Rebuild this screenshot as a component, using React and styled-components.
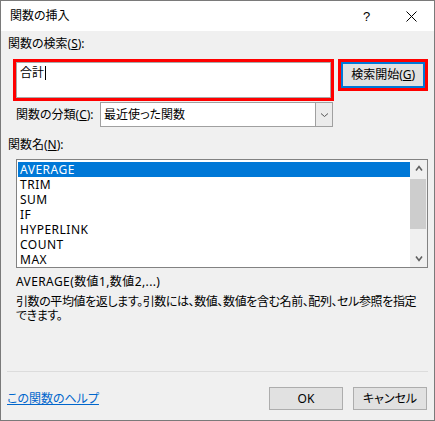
import React from "react";
import styled, { createGlobalStyle } from "styled-components";

const GlobalStyle = createGlobalStyle`
  html, body { margin: 0; padding: 0; background: #ffffff; }
  body {
    font-family: "Noto Sans", "Noto Sans CJK JP", sans-serif;
    font-size: 12px;
    color: #000;
    font-feature-settings: "palt";
  }
  * { box-sizing: border-box; }
`;

const Window = styled.div`
  width: 435px;
  height: 421px;
  border: 1px solid #7a7a7a;
  background: #f0f0f0;
  display: flex;
  flex-direction: column;
  overflow: hidden;
`;

const TitleBar = styled.div`
  height: 30px;
  flex: none;
  background: #ffffff;
  display: flex;
  align-items: center;
  padding-left: 9px;
`;

const Title = styled.div`
  flex: 1;
  font-size: 12px;
  line-height: 16px;
`;

const TitleButton = styled.div`
  width: 45px;
  height: 30px;
  display: flex;
  align-items: center;
  justify-content: center;
  font-family: "Liberation Sans", sans-serif;
  font-size: 13px;
`;

const Body = styled.div`
  flex: 1;
  display: flex;
  flex-direction: column;
  padding: 5px 6px 10px 7px;
`;

const Label = styled.div`
  line-height: 16px;
  height: 16px;
  margin-top: ${(p) => p.$top || 0}px;
  margin-left: ${(p) => p.$left || 0}px;
  white-space: nowrap;
`;

const SearchRow = styled.div`
  display: flex;
  align-items: flex-start;
  margin-top: 7px;
  margin-left: 5px;
  gap: 4px;
`;

const Highlight = styled.div`
  border: 3px solid #ff0000;
  width: ${(p) => p.$w}px;
  height: ${(p) => p.$h}px;
`;

const SearchBox = styled.div`
  width: 100%;
  height: 100%;
  background: #ffffff;
  border: 1px solid #a9a9a9;
  padding: 2px 3px;
  line-height: 16px;
  display: flex;
  align-items: flex-start;
`;

const Caret = styled.span`
  display: inline-block;
  width: 1px;
  height: 14px;
  margin-top: 1px;
  margin-left: 1px;
  background: #000;
`;

const SearchButton = styled.div`
  width: 100%;
  height: 100%;
  background: #e1e1e1;
  border: 2px solid #0078d7;
  display: flex;
  align-items: center;
  justify-content: center;
  line-height: 16px;
`;

const CategoryRow = styled.div`
  display: flex;
  align-items: center;
  margin-top: 1px;
  margin-left: 8px;
`;

const CategoryLabel = styled.div`
  width: 84px;
  line-height: 16px;
  white-space: nowrap;
`;

const Select = styled.div`
  width: 233px;
  height: 25px;
  background: #ffffff;
  border: 1px solid #a0a0a0;
  display: flex;
  align-items: stretch;
`;

const SelectValue = styled.div`
  flex: 1;
  padding-left: 3px;
  display: flex;
  align-items: center;
  line-height: 16px;
`;

const SelectArrow = styled.div`
  width: 17px;
  background: #ebebeb;
  border-left: 1px solid #a0a0a0;
  display: flex;
  align-items: center;
  justify-content: center;
`;

const ListBox = styled.div`
  margin-top: 6px;
  margin-left: 8px;
  width: 412px;
  height: 109px;
  border: 1px solid #828282;
  background: #ffffff;
  display: flex;
`;

const ListItems = styled.div`
  flex: 1;
  padding: 2px 0 0 1px;
`;

const Item = styled.div`
  height: 15px;
  line-height: 15px;
  padding-left: 2px;
  letter-spacing: 0.5px;
  background: ${(p) => (p.$selected ? "#0078d7" : "transparent")};
  color: ${(p) => (p.$selected ? "#ffffff" : "#000000")};
  white-space: nowrap;
`;

const Scrollbar = styled.div`
  width: 17px;
  background: #f0f0f0;
  display: flex;
  flex-direction: column;
`;

const ScrollArrow = styled.div`
  height: 17px;
  display: flex;
  align-items: center;
  justify-content: center;
`;

const Track = styled.div`
  flex: 1;
  padding: 2px 1px 0 0;
`;

const Thumb = styled.div`
  height: 50px;
  background: #cdcdcd;
`;

const Syntax = styled.div`
  margin-top: 6px;
  margin-left: 8px;
  line-height: 16px;
  letter-spacing: 0.4px;
  white-space: nowrap;
`;

const Description = styled.div`
  margin-top: 5px;
  margin-left: 8px;
  width: 406px;
  line-height: 14px;
  letter-spacing: -0.4px;
`;

const Separator = styled.div`
  margin-top: auto;
  margin-left: -1px;
  width: 421px;
  height: 1px;
  background: #dcdcdc;
`;

const Footer = styled.div`
  margin-top: 15px;
  display: flex;
  align-items: center;
`;

const HelpLink = styled.a`
  flex: 1;
  margin-left: -1px;
  color: #0066cc;
  text-decoration: underline;
  line-height: 16px;
  cursor: pointer;
`;

const Button = styled.div`
  width: 74px;
  height: 23px;
  background: #e1e1e1;
  border: 1px solid #adadad;
  display: flex;
  align-items: center;
  justify-content: center;
  margin-left: ${(p) => p.$gap || 0}px;
  margin-right: ${(p) => p.$right || 0}px;
  line-height: 16px;
`;

const Chevron = ({ dir = "down", color = "#606060", w = 8, h = 5, sw = 1.6 }) => (
  <svg width={w} height={h + 2} viewBox={`0 0 ${w} ${h + 2}`}>
    {dir === "down" ? (
      <polyline points={`1,1.5 ${w / 2},${h + 0.5} ${w - 1},1.5`} fill="none" stroke={color} strokeWidth={sw} />
    ) : (
      <polyline points={`1,${h + 0.5} ${w / 2},1.5 ${w - 1},${h + 0.5}`} fill="none" stroke={color} strokeWidth={sw} />
    )}
  </svg>
);

const items = ["AVERAGE", "TRIM", "SUM", "IF", "HYPERLINK", "COUNT", "MAX"];

export default function App() {
  return (
    <>
      <GlobalStyle />
      <Window>
        <TitleBar>
          <Title>関数の挿入</Title>
          <TitleButton>?</TitleButton>
          <TitleButton>
            <svg width="11" height="11" viewBox="0 0 11 11">
              <path d="M0.5 0.5 L10.5 10.5 M10.5 0.5 L0.5 10.5" stroke="#000" strokeWidth="1" fill="none" />
            </svg>
          </TitleButton>
        </TitleBar>
        <Body>
          <Label>
            関数の検索(<u>S</u>):
          </Label>
          <SearchRow>
            <Highlight $w={323} $h={42}>
              <SearchBox>
                合計<Caret />
              </SearchBox>
            </Highlight>
            <Highlight $w={90} $h={32}>
              <SearchButton>
                検索開始(<u>G</u>)
              </SearchButton>
            </Highlight>
          </SearchRow>
          <CategoryRow>
            <CategoryLabel>
              関数の分類(<u>C</u>):
            </CategoryLabel>
            <Select>
              <SelectValue>最近使った関数</SelectValue>
              <SelectArrow>
                <Chevron w={9} h={4} sw={1} color="#555" />
              </SelectArrow>
            </Select>
          </CategoryRow>
          <Label $top={10}>
            関数名(<u>N</u>):
          </Label>
          <ListBox>
            <ListItems>
              {items.map((it, i) => (
                <Item key={it} $selected={i === 0}>
                  {it}
                </Item>
              ))}
            </ListItems>
            <Scrollbar>
              <ScrollArrow>
                <Chevron dir="up" />
              </ScrollArrow>
              <Track>
                <Thumb />
              </Track>
              <ScrollArrow>
                <Chevron dir="down" />
              </ScrollArrow>
            </Scrollbar>
          </ListBox>
          <Syntax>AVERAGE(数値1,数値2,...)</Syntax>
          <Description>
            引数の平均値を返します。引数には、数値、数値を含む名前、配列、セル参照を指定できます。
          </Description>
          <Separator />
          <Footer>
            <HelpLink>この関数のヘルプ</HelpLink>
            <Button>OK</Button>
            <Button $gap={10} $right={1}>
              キャンセル
            </Button>
          </Footer>
        </Body>
      </Window>
    </>
  );
}
